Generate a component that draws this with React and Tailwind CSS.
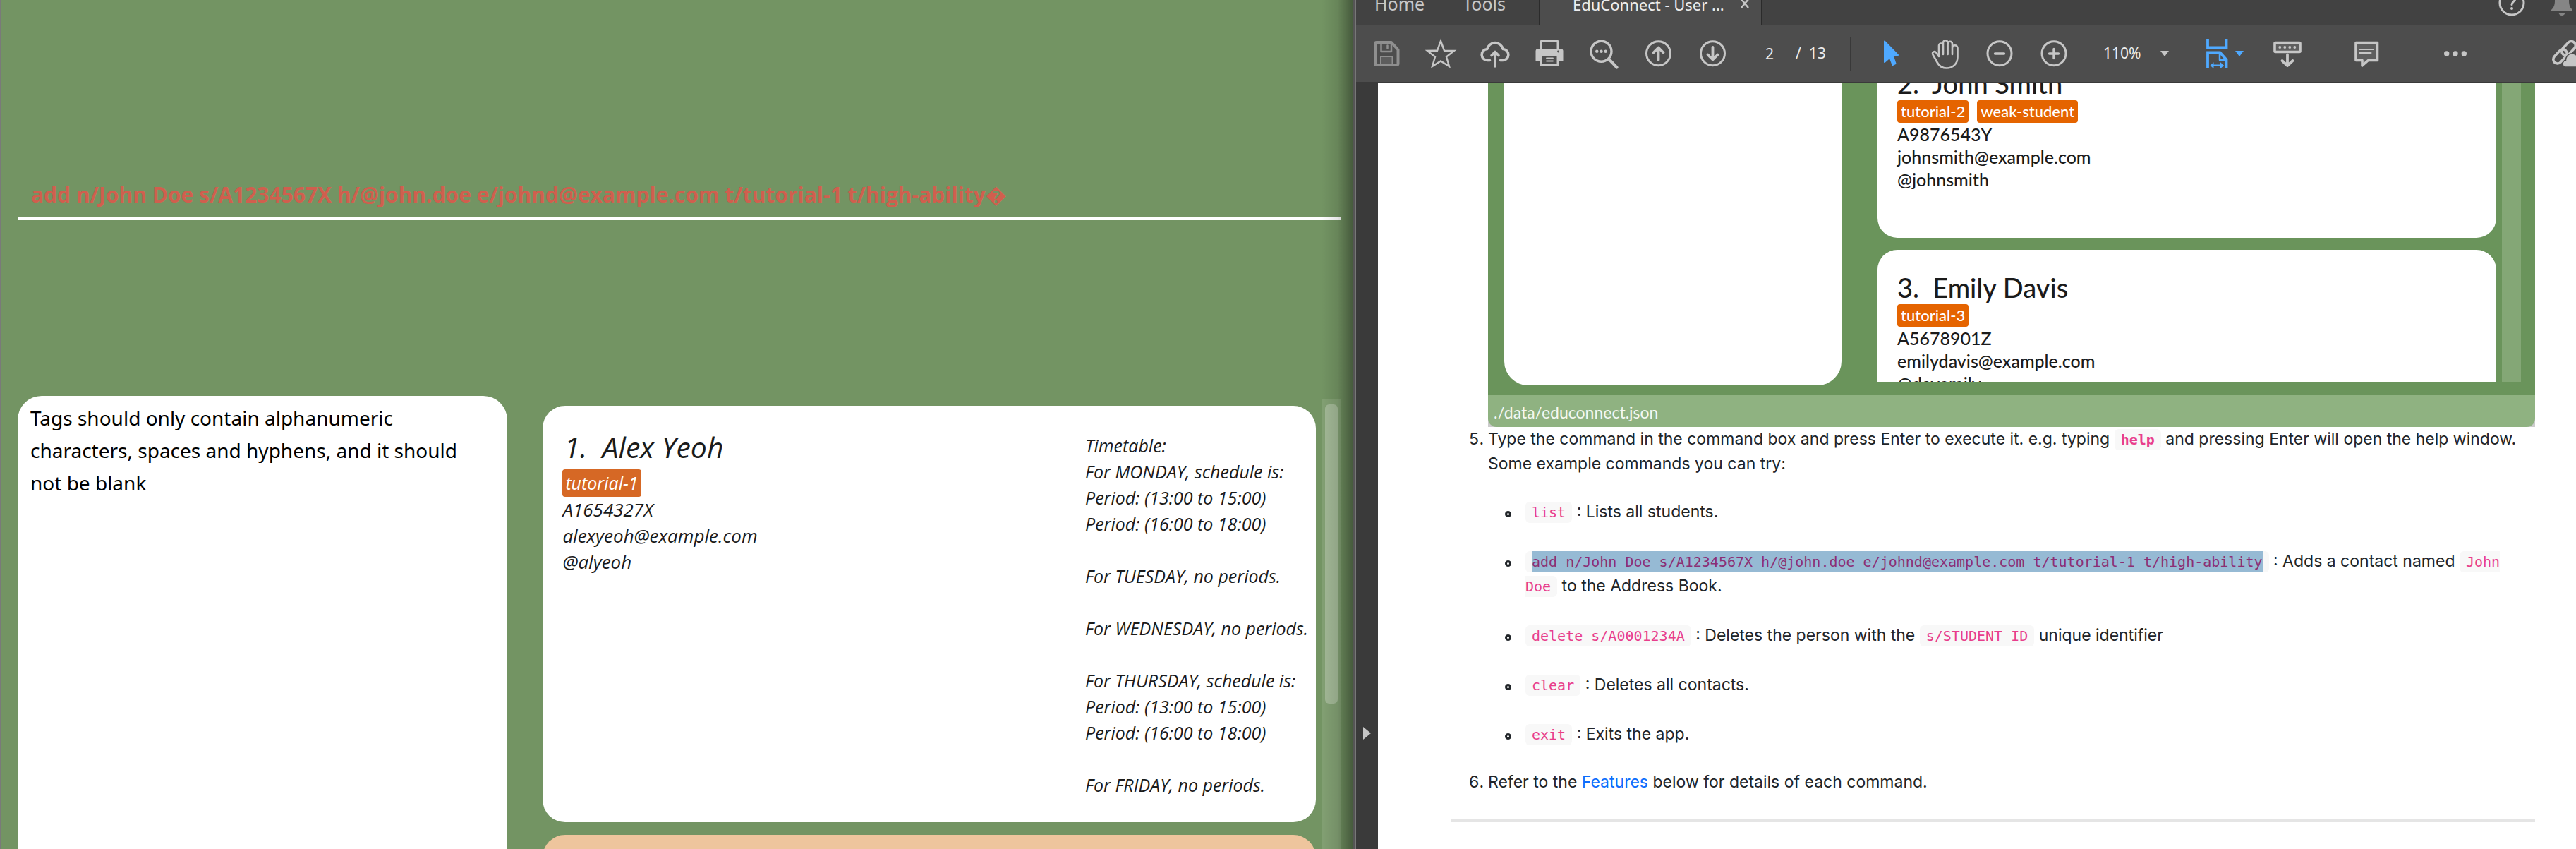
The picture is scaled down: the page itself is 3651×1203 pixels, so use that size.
import React from "react";

const timetable = [
  "Timetable:",
  "For MONDAY, schedule is:",
  "Period: (13:00 to 15:00)",
  "Period: (16:00 to 18:00)",
  "",
  "For TUESDAY, no periods.",
  "",
  "For WEDNESDAY, no periods.",
  "",
  "For THURSDAY, schedule is:",
  "Period: (13:00 to 15:00)",
  "Period: (16:00 to 18:00)",
  "",
  "For FRIDAY, no periods.",
];

function Icon({ children, color = "text-[#c6c6c6]" }) {
  return (
    <svg
      viewBox="0 0 48 48"
      className={"h-12 w-12 shrink-0 " + color}
      fill="none"
      stroke="currentColor"
      strokeWidth="3"
      strokeLinecap="round"
      strokeLinejoin="round"
      aria-hidden="true"
    >
      {children}
    </svg>
  );
}

function Tool({ label, color, children }) {
  return (
    <button type="button" aria-label={label} className="flex w-[77px] shrink-0 items-center justify-center">
      <Icon color={color}>{children}</Icon>
    </button>
  );
}

function AppWindow() {
  return (
    <section className="relative flex min-w-0 flex-col overflow-hidden border-r-2 border-l-2 border-r-[#555555] border-l-[#7a7a7a] bg-[#739463] pr-[18px] pl-[23px] font-['Noto_Sans',sans-serif]">
      <div className="flex h-[312px] shrink-0 flex-col justify-end">
        <input
          aria-label="Command"
          defaultValue={"add n/John Doe s/A1234567X h/@john.doe e/johnd@example.com t/tutorial-1 t/high-ability\uFFFD"}
          className="w-full border-b-4 border-white bg-transparent pb-3 pl-[19px] font-['Open_Sans',sans-serif] text-[30px] leading-10 font-bold text-[#d05f4e] outline-none"
        />
      </div>
      <div className="grid min-h-0 flex-1 grid-cols-[694fr_1130fr] gap-x-[50px] pt-[249px]">
        <div className="rounded-t-[34px] bg-white pt-2 pr-6 pl-[18px] text-[28px] leading-[46px] text-black">
          Tags should only contain alphanumeric characters, spaces and hyphens, and it should not be blank
        </div>
        <div className="flex min-h-0 min-w-0 pt-1">
          <div className="flex min-w-0 flex-1 flex-col gap-[18px] overflow-hidden pt-2.5 font-['Open_Sans',sans-serif] text-[26px] leading-[37px] text-[#1b1b1b] italic">
            <article className="flex shrink-0 justify-between rounded-[32px] bg-white pr-0 pl-7">
              <div className="flex flex-col items-start pt-[30px]">
                <h2 className="pl-0.5 text-[41px] leading-14 whitespace-pre">{"1.  Alex Yeoh"}</h2>
                <span className="mt-1 rounded bg-[#d66825] px-1 text-[25px] leading-[39px] text-white">tutorial-1</span>
                <p>A1654327X</p>
                <p>alexyeoh@example.com</p>
                <p>@alyeoh</p>
              </div>
              <div className="w-[327px] pt-[38px] pb-[34px] text-[25px] whitespace-nowrap">
                {timetable.map((line, i) => (
                  <p key={i} className="h-[37px]">{line}</p>
                ))}
              </div>
            </article>
            <article className="h-[590px] shrink-0 rounded-[32px] bg-[#eec59d]" />
          </div>
          <div className="ml-[9px] w-[26px] bg-[#82a073] px-[4px] pt-2">
            <div className="h-[424px] rounded-md bg-[#a2b896]" />
          </div>
        </div>
      </div>
      <div className="pointer-events-none absolute inset-y-0 right-0 w-14 bg-gradient-to-r from-transparent from-20% via-black/10 via-60% to-black/40" />
    </section>
  );
}

function TabBar() {
  return (
    <header className="flex h-9 shrink-0 items-end overflow-hidden bg-[#424242] font-['Noto_Sans',sans-serif] text-[24px] leading-9 text-[#c8c8c8]">
      <nav className="flex h-9 w-[260px] shrink-0 items-end gap-[54px] border-r border-b border-[#2b2b2b] pb-3 pl-[26px] text-[25px]">
        <a href="#home">Home</a>
        <a href="#tools">Tools</a>
      </nav>
      <div className="flex h-9 w-[314px] shrink-0 items-end bg-[#4d4d4d] pb-3 pl-[47px] text-[22px] text-[#ededed]">
        <span className="flex-1 whitespace-nowrap">EduConnect - User ...</span>
        <button type="button" aria-label="Close tab" className="mr-4 mb-3">
          <svg viewBox="0 0 14 14" className="h-3.5 w-3.5" stroke="#c6c6c6" strokeWidth="2.5" aria-hidden="true">
            <path d="M2 1l10 12M12 1L2 13" />
          </svg>
        </button>
      </div>
      <div className="flex h-9 flex-1 items-end justify-end gap-[23px] border-b border-l border-[#2b2b2b] pr-0">
        <button type="button" aria-label="Help" className="mb-[7px]">
          <Icon>
            <circle cx="24" cy="24" r="17" />
            <path d="M19.5 18.5c0-6 9.500-5.500 9.500-.5 0 4-5 4.500-5 8.500" />
            <circle cx="24" cy="32" r="2" fill="currentColor" stroke="none" />
          </Icon>
        </button>
        <button type="button" aria-label="Notifications" className="-mr-1 mb-[7px]">
          <Icon color="text-[#858585]">
            <g fill="currentColor" stroke="none">
              <path d="M14 12h20v9c0 7 2 10 5 13v2H9v-2c3-3 5-6 5-13z" />
              <path d="M19.500 38h9a4.500 4 0 0 1-9 0z" />
            </g>
          </Icon>
        </button>
      </div>
    </header>
  );
}

function Toolbar() {
  return (
    <div className="flex h-[81px] shrink-0 items-center overflow-hidden border-b border-[#3a3a3a] bg-[#4d4d4d] pl-1 font-['Noto_Sans',sans-serif] text-[21px] text-[#ececec]">
      <Tool label="Save" color="text-[#8f8f8f]">
        <path d="M10 8h21l9.500 10.500V38a2 2 0 0 1-2 2H10a2 2 0 0 1-2-2V10a2 2 0 0 1 2-2z" strokeWidth="4" />
        <path d="M16.500 8v13H31V9M25.500 12.500v4" strokeWidth="2.500" />
        <path d="M16 39V28h16.500v11" strokeWidth="2" fill="#5d5d5d" />
      </Tool>
      <Tool label="Star">
        <path d="M24 6l5 13.700 14 .3-11 8.500L36 42l-12-7.500L12 42l4-13.500L5 20l14-.3z" strokeWidth="2.400" strokeLinejoin="miter" />
      </Tool>
      <Tool label="Upload">
        <path d="M16.500 33.500h-3A8 8 0 0 1 12.800 17.500a11.500 11.500 0 0 1 22.400 0A8 8 0 0 1 34.500 33.500h-3" strokeWidth="3.600" />
        <path d="M24 42V22M19 26.500l5-5 5 5" strokeWidth="3.600" />
      </Tool>
      <Tool label="Print">
        <path d="M12 17V6.500h24V17" />
        <path d="M8 17h32a3.500 3.500 0 0 1 3.500 3.500V35H4.500V20.500A3.500 3.500 0 0 1 8 17z" fill="currentColor" stroke="none" />
        <path d="M12 26.500h24V40H12z" fill="#4d4d4d" />
        <path d="M20 30.500h9M20 34.500h9" strokeWidth="1.800" />
        <circle cx="36.500" cy="21" r="1.400" fill="#4d4d4d" stroke="none" />
      </Tool>
      <Tool label="Find">
        <circle cx="20.500" cy="20.700" r="14.500" strokeWidth="3.400" />
        <path d="M32 32.500l10.500 11" strokeWidth="4.200" />
        <g fill="currentColor" stroke="none">
          <circle cx="14.300" cy="20.700" r="2.200" />
          <circle cx="20.500" cy="20.700" r="2.200" />
          <circle cx="26.700" cy="20.700" r="2.200" />
        </g>
      </Tool>
      <Tool label="Previous page">
        <circle cx="24.500" cy="23.700" r="17" />
        <path d="M24.500 33V16M17.500 22.500l7-7 7 7" strokeWidth="3.800" />
      </Tool>
      <Tool label="Next page">
        <circle cx="24.500" cy="23.700" r="17" />
        <path d="M24.500 15v17M17.500 25.500l7 7 7-7" strokeWidth="3.800" />
      </Tool>
      <input
        aria-label="Page number"
        defaultValue="2"
        className="ml-[18px] h-[49px] w-[50px] shrink-0 border-b border-[#777777] bg-transparent text-center outline-none"
      />
      <span className="ml-3 w-[77px] shrink-0 whitespace-pre">{"/  13"}</span>
      <div className="h-[49px] w-px shrink-0 bg-[#393939]" />
      <div className="flex shrink-0 pl-[18px]">
        <Tool label="Select" color="text-[#4fa9ff]">
          <path d="M15 6.500L34 26l-7 1.500 3.500 10.500-4 2-4-10.500L15 36z" fill="currentColor" strokeWidth="2" />
        </Tool>
        <Tool label="Hand">
          <path d="M15 28V12.500a3 3 0 0 1 6 0V25M21 12V8.500a3.300 3.300 0 0 1 6.600 0V25M27.600 10a3.200 3.200 0 0 1 6.400 0V25M34 16a3.700 3.700 0 0 1 7.500 0v13c0 9-6.500 15.500-15.500 15.500-7 0-10.500-3-13-7.500L6.500 25.500c-2-4 2.500-5.500 4.700-3L15 28" strokeWidth="2.600" />
        </Tool>
        <Tool label="Zoom out">
          <circle cx="24" cy="23.700" r="17" />
          <path d="M17.500 24h13" strokeWidth="3.400" />
        </Tool>
        <Tool label="Zoom in">
          <circle cx="24" cy="23.700" r="17" />
          <path d="M17.500 24h13M24 17.500v13" strokeWidth="3.400" />
        </Tool>
      </div>
      <div className="ml-[18px] flex h-[49px] w-[121px] shrink-0 items-center border-b border-[#777777]">
        <select aria-label="Zoom level" className="w-full appearance-none bg-transparent pl-3.5 outline-none">
          <option>110%</option>
        </select>
        <svg viewBox="0 0 12 8" className="mr-3.5 h-2 w-3 shrink-0" fill="#c6c6c6" aria-hidden="true">
          <path d="M0 0h12L6 8z" />
        </svg>
      </div>
      <button type="button" aria-label="Page fit" className="ml-[30px] flex shrink-0 items-center">
        <Icon color="text-[#4fa9ff]">
          <g strokeWidth="3.800" strokeLinecap="butt" strokeLinejoin="miter">
            <path d="M11 3v12.500h26.500V3" />
            <path d="M11 45V22.500h17.500l9 10V45" />
          </g>
          <path d="M28 23v10h9" strokeWidth="2.500" />
          <path d="M18 40.700h13" strokeWidth="2.200" />
          <path d="M14.500 40.700l5-4.500v9zM34 40.700l-5-4.500v9z" fill="currentColor" stroke="none" />
        </Icon>
        <svg viewBox="0 0 12 8" className="ml-0.5 h-2 w-3" fill="#4fa9ff" aria-hidden="true">
          <path d="M0 0h12L6 8z" />
        </svg>
      </button>
      <div className="ml-[22px] flex">
        <Tool label="Scroll mode">
          <rect x="7" y="8.500" width="36" height="13" rx="1" strokeWidth="3.600" fill="#5f5f5f" />
          <g fill="currentColor" stroke="none">
            <circle cx="14.300" cy="15" r="1.900" />
            <circle cx="21.300" cy="15" r="1.900" />
            <circle cx="28.300" cy="15" r="1.900" />
            <circle cx="35.300" cy="15" r="1.900" />
          </g>
          <path d="M25 25.500v15M17.500 34l7.500 7 7.500-7" strokeWidth="3.800" />
        </Tool>
      </div>
      <div className="ml-[17px] h-[49px] w-px shrink-0 bg-[#393939]" />
      <div className="ml-[18px] flex shrink-0">
        <Tool label="Comment">
          <path d="M9 8.500h30.500v25H26.500L18 41v-7.500H9z" fill="#5f5f5f" strokeWidth="3.600" />
          <path d="M14 18h20M14 23h16.500" strokeWidth="2" />
        </Tool>
      </div>
      <div className="ml-[49px] flex shrink-0">
        <Tool label="More tools">
          <g fill="currentColor" stroke="none">
            <circle cx="11.700" cy="24" r="3.700" />
            <circle cx="24" cy="24" r="3.700" />
            <circle cx="36.300" cy="24" r="3.700" />
          </g>
        </Tool>
      </div>
      <button type="button" aria-label="Share link" className="-mr-[9px] ml-auto flex shrink-0">
        <Icon>
          <g strokeWidth="3.600">
            <rect x="5" y="22" width="23" height="12" rx="6" transform="rotate(-47 16.500 28)" />
            <rect x="17" y="10.500" width="23" height="12" rx="6" transform="rotate(-47 28.500 16.500)" />
          </g>
          <path d="M23 43a5 5 0 0 1 1.500-9.500A9 9 0 0 1 42 30v13z" fill="currentColor" stroke="#4d4d4d" strokeWidth="1.500" />
        </Icon>
      </button>
    </div>
  );
}

function Student({ name, tags, id, email, handle }) {
  return (
    <article className="h-[272px] shrink-0 rounded-[28px] bg-white pt-[29px] pl-7 font-medium">
      <h3 className="text-[38px] leading-12 whitespace-pre">{name}</h3>
      <div className="flex gap-3 text-[22px] text-white">
        {tags.map((t) => (
          <span key={t} className="rounded bg-[#e56400] px-[5px]">{t}</span>
        ))}
      </div>
      <p>{id}</p>
      <p>{email}</p>
      <p>{handle}</p>
    </article>
  );
}

function Code({ children, className = "text-[#e83e8c]" }) {
  return (
    <code className={"rounded-md bg-[#f8f8f8] px-[9px] py-[3px] font-['DejaVu_Sans_Mono',monospace] text-[20px] leading-none " + className}>
      {children}
    </code>
  );
}

function Example({ children }) {
  return (
    <li className="relative before:absolute before:top-4 before:-left-[29px] before:size-[9px] before:rounded-full before:border-[3px] before:border-[#212529]">
      {children}
    </li>
  );
}

function Reader() {
  return (
    <section className="flex min-w-0 flex-col overflow-hidden border-l-2 border-[#777777] bg-white">
      <TabBar />
      <Toolbar />
      <div className="flex min-h-0 flex-1">
        <aside className="flex w-[31px] shrink-0 flex-col items-center bg-[#3a3a3a] pt-[913px]">
          <button type="button" aria-label="Open side pane">
            <svg viewBox="0 0 11 18" className="h-[18px] w-[11px]" fill="#c6c6c6" aria-hidden="true">
              <path d="M0 0l11 9-11 9z" />
            </svg>
          </button>
        </aside>
        <main className="min-w-0 flex-1 pr-[58px] pl-[104px] font-['Inter',sans-serif] text-[23px] leading-[35px] text-[#212529]">
          <figure className="ml-[52px] bg-[#cccccc] font-['Lato',sans-serif] text-[25px] leading-8 text-[#1b1b1b]">
            <div className="flex h-[443px] bg-[#6a945b] pr-5 pl-[23px]">
              <div className="mr-[51px] mb-3.5 flex-[478] rounded-b-[34px] bg-white" />
              <div className="mb-[19px] min-w-0 flex-[877] overflow-hidden">
                <div className="-mt-[52px] flex flex-col gap-[17px]">
                  <Student name={"2.  John Smith"} tags={["tutorial-2", "weak-student"]} id="A9876543Y" email="johnsmith@example.com" handle="@johnsmith" />
                  <Student name={"3.  Emily Davis"} tags={["tutorial-3"]} id="A5678901Z" email="emilydavis@example.com" handle="@davemily" />
                </div>
              </div>
              <div className="mb-[19px] ml-2 w-[27px] bg-[#84a776]" />
            </div>
            <figcaption className="h-[45px] rounded-b-xl bg-[#8fb281] pt-2 pl-2 text-[23px] text-[#f4f8f2]">./data/educonnect.json</figcaption>
          </figure>
          <ol start={5} className="list-decimal pl-[52px]">
            <li>
              Type the command in the command box and press Enter to execute it. e.g. typing{" "}
              <Code className="font-bold text-[#e83e8c]">help</Code> and pressing Enter will open the help window.
              <br />
              Some example commands you can try:
              <ul className="mt-[33px] mb-[33px] flex flex-col gap-[35px] pl-[53px]">
                <Example><Code>list</Code> : Lists all students.</Example>
                <Example>
                  <Code>
                    <mark className="bg-[#96bad4] py-[3px] text-[#8b2f75]">add n/John Doe s/A1234567X h/@john.doe e/johnd@example.com t/tutorial-1 t/high-ability</mark>
                  </Code>{" "}
                  : Adds a contact named <Code>John Doe</Code> to the Address Book.
                </Example>
                <Example><Code>delete s/A0001234A</Code> : Deletes the person with the <Code>s/STUDENT_ID</Code> unique identifier</Example>
                <Example><Code>clear</Code> : Deletes all contacts.</Example>
                <Example><Code>exit</Code> : Exits the app.</Example>
              </ul>
            </li>
            <li>
              Refer to the <a href="#features" className="text-[#0d6efd]">Features</a> below for details of each command.
            </li>
          </ol>
          <hr className="mt-[35px] border-t-4 border-[#e5e5e5]" />
        </main>
      </div>
    </section>
  );
}

export default function App() {
  return (
    <div className="grid h-screen grid-cols-[1920fr_1731fr] grid-rows-[minmax(0,1fr)] overflow-hidden">
      <AppWindow />
      <Reader />
    </div>
  );
}
